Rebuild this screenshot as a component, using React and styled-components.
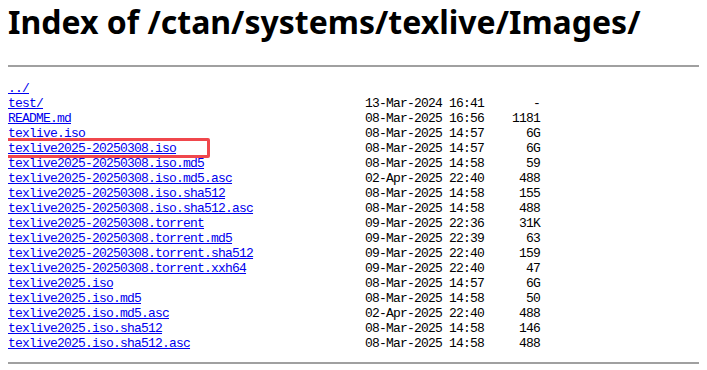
import React from "react";
import styled, { createGlobalStyle } from "styled-components";

const Global = createGlobalStyle`
  html, body { background: #fff; }
  body { margin: 8px; font-family: "Noto Sans", "Liberation Sans", sans-serif; color: #000; }
`;

const Title = styled.h1`
  font-family: "Noto Sans", "Liberation Sans", sans-serif;
  font-size: 32px;
  font-weight: 700;
  margin: 0 0 29px;
  line-height: 28px;
  white-space: nowrap;
`;

const Rule = styled.hr`
  margin: 0;
  border: none;
  height: 2px;
  background: #a0a0a0;
`;

const Listing = styled.div`
  margin: 14px 0 11px;
  font-family: "Liberation Mono", "DejaVu Sans Mono", monospace;
  font-size: 13px;
  letter-spacing: -0.8px;
  line-height: 15px;
`;

const Row = styled.div`
  position: relative;
  display: grid;
  grid-template-columns: 357px 119px 56px;
  height: 15px;
  white-space: pre;
`;

const Name = styled.a`
  color: #0000ee;
  text-decoration: underline;
  justify-self: start;
`;

const Cell = styled.span`
  color: #000;
  text-align: ${(p) => (p.$right ? "right" : "left")};
`;

const Highlight = styled.div`
  position: absolute;
  left: -7px;
  top: -3px;
  width: 203px;
  height: 14px;
  border: 3px solid #f0474c;
  border-radius: 2px;
  pointer-events: none;
`;

const entries = [
  ["../", "", ""],
  ["test/", "13-Mar-2024 16:41", "-"],
  ["README.md", "08-Mar-2025 16:56", "1181"],
  ["texlive.iso", "08-Mar-2025 14:57", "6G"],
  ["texlive2025-20250308.iso", "08-Mar-2025 14:57", "6G", true],
  ["texlive2025-20250308.iso.md5", "08-Mar-2025 14:58", "59"],
  ["texlive2025-20250308.iso.md5.asc", "02-Apr-2025 22:40", "488"],
  ["texlive2025-20250308.iso.sha512", "08-Mar-2025 14:58", "155"],
  ["texlive2025-20250308.iso.sha512.asc", "08-Mar-2025 14:58", "488"],
  ["texlive2025-20250308.torrent", "09-Mar-2025 22:36", "31K"],
  ["texlive2025-20250308.torrent.md5", "09-Mar-2025 22:39", "63"],
  ["texlive2025-20250308.torrent.sha512", "09-Mar-2025 22:40", "159"],
  ["texlive2025-20250308.torrent.xxh64", "09-Mar-2025 22:40", "47"],
  ["texlive2025.iso", "08-Mar-2025 14:57", "6G"],
  ["texlive2025.iso.md5", "08-Mar-2025 14:58", "50"],
  ["texlive2025.iso.md5.asc", "02-Apr-2025 22:40", "488"],
  ["texlive2025.iso.sha512", "08-Mar-2025 14:58", "146"],
  ["texlive2025.iso.sha512.asc", "08-Mar-2025 14:58", "488"],
];

export default function App() {
  return (
    <>
      <Global />
      <Title>Index of /ctan/systems/texlive/Images/</Title>
      <Rule />
      <Listing>
        {entries.map(([name, date, size, hl]) => (
          <Row key={name}>
            {hl && <Highlight />}
            <Name href="#">{name}</Name>
            <Cell>{date}</Cell>
            <Cell $right>{size}</Cell>
          </Row>
        ))}
      </Listing>
      <Rule />
    </>
  );
}
